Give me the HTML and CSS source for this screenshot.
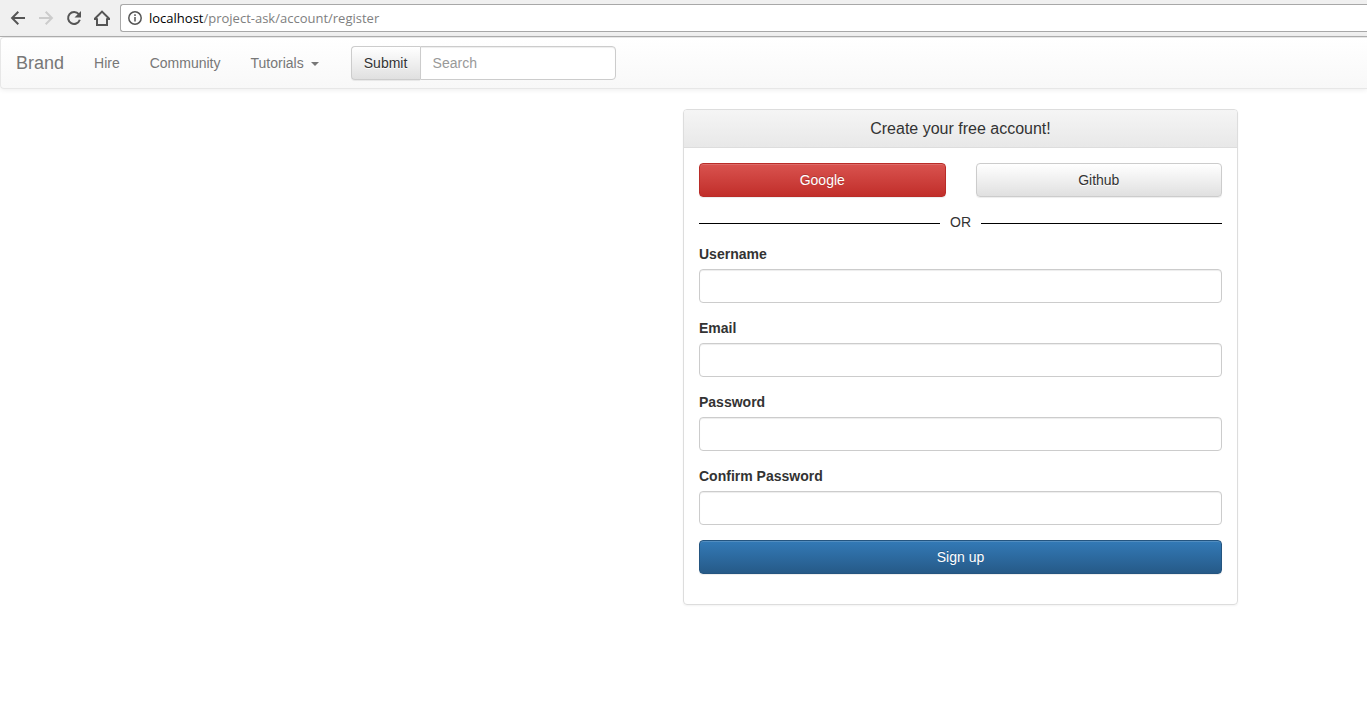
FILE: index.html
```html
<!DOCTYPE html>
<html lang="en">
<head>
<meta charset="utf-8">
<title>Register</title>
<link rel="stylesheet" href="styles.css">
</head>
<body>
<div class="toolbar">
  <button class="tool" type="button" aria-label="Back"><svg viewBox="0 0 16 16"><path d="M15 8H2.5M8.3 1.8 2.1 8l6.2 6.2"/></svg></button>
  <button class="tool tool-off" type="button" aria-label="Forward" disabled><svg viewBox="0 0 16 16"><path d="M1 8h12.5M7.7 1.8 13.9 8l-6.2 6.2"/></svg></button>
  <button class="tool" type="button" aria-label="Reload"><svg viewBox="0 0 16 16"><path d="M12.8 4.2A6 6 0 1 0 13.8 9.8"/><path class="solid" d="M15 1v6.500H8.500z"/></svg></button>
  <button class="tool" type="button" aria-label="Home"><svg viewBox="0 0 16 16"><path d="M3 8.200V15h10V8.200M0 9h3M13 9h3M.8 8.800 8 1.600l7.200 7.200"/></svg></button>
  <div class="address">
    <svg class="info" viewBox="0 0 14 14"><circle cx="7" cy="7" r="6.200"/><path d="M7 6v4.500M7 3.300v1.700"/></svg>
    <div class="url"><span class="host">localhost</span>/project-ask/account/register</div>
  </div>
</div>
<nav class="navbar">
  <a class="brand" href="#">Brand</a>
  <a class="nav-link" href="#">Hire</a>
  <a class="nav-link" href="#">Community</a>
  <a class="nav-link" href="#">Tutorials <span class="caret"></span></a>
  <form class="search">
    <button class="btn btn-default btn-joined" type="submit">Submit</button>
    <input class="field field-joined" type="text" placeholder="Search" aria-label="Search">
  </form>
</nav>
<main class="page">
  <section class="panel">
    <h1 class="panel-title">Create your free account!</h1>
    <div class="panel-body">
      <div class="providers">
        <button class="btn btn-danger" type="button">Google</button>
        <button class="btn btn-default" type="button">Github</button>
      </div>
      <div class="divider">OR</div>
      <form class="register">
        <div class="group"><label class="label" for="username">Username</label><input class="field" id="username" type="text"></div>
        <div class="group"><label class="label" for="email">Email</label><input class="field" id="email" type="email"></div>
        <div class="group"><label class="label" for="password">Password</label><input class="field" id="password" type="password"></div>
        <div class="group"><label class="label" for="confirm">Confirm Password</label><input class="field" id="confirm" type="password"></div>
        <button class="btn btn-primary" type="submit">Sign up</button>
      </form>
    </div>
  </section>
</main>
</body>
</html>
```

FILE: styles.css
```css
* { box-sizing: border-box; }

body {
  margin: 0;
  background: #fff;
  color: #333;
  font: 14px/20px "Liberation Sans", Arial, sans-serif;
}

/* Browser toolbar */
.toolbar {
  display: flex;
  align-items: center;
  gap: 12px;
  padding: 4px 0 4px 10px;
  border-bottom: 1px solid #b0b0b0;
  background: #f0f0f0;
}
.tool {
  width: 16px;
  height: 16px;
  padding: 0;
  border: 0;
  background: none;
  color: #555;
}
.tool-off { color: #ccc; }
.tool svg {
  display: block;
  fill: none;
  stroke: currentColor;
  stroke-width: 2;
}
.tool .solid {
  fill: currentColor;
  stroke: none;
}
.address {
  display: flex;
  flex: 1;
  align-items: center;
  gap: 7px;
  height: 28px;
  margin-left: -2px;
  padding-left: 7px;
  border: 1px solid #a8a8a8;
  border-right: 0;
  border-radius: 3px 0 0 3px;
  background: #fff;
}
.info {
  width: 14px;
  height: 14px;
  fill: none;
  stroke: #555;
  stroke-width: 1.5;
}
.url {
  color: #808080;
  font-family: "Open Sans", "Noto Sans", sans-serif;
  font-size: 13px;
}
.host { color: #000; }

/* Site navigation */
.navbar {
  display: flex;
  align-items: center;
  height: 52px;
  border: 1px solid #e7e7e7;
  border-right: 0;
  border-radius: 4px 0 0 4px;
  background: linear-gradient(#fff, #f8f8f8);
  box-shadow: inset 0 1px 0 rgba(255, 255, 255, .15), 0 1px 5px rgba(0, 0, 0, .075);
}
.brand, .nav-link {
  padding: 15px;
  color: #777;
  text-decoration: none;
  text-shadow: 0 1px 0 rgba(255, 255, 255, .25);
}
.brand { font-size: 18px; }
.caret {
  display: inline-block;
  margin-left: 3px;
  border: 4px solid transparent;
  border-top-color: currentColor;
  border-bottom: 0;
  vertical-align: middle;
}
.search {
  display: flex;
  padding: 0 17px;
}

/* Controls */
.btn {
  height: 34px;
  padding: 6px 12px;
  border: 1px solid;
  border-radius: 4px;
  font: inherit;
  box-shadow: inset 0 1px 0 rgba(255, 255, 255, .15), 0 1px 1px rgba(0, 0, 0, .075);
}
.btn-default {
  border-color: #ccc;
  background: linear-gradient(#fff, #e0e0e0);
  color: #333;
  text-shadow: 0 1px 0 #fff;
}
.btn-danger {
  border-color: #b92c28;
  background: linear-gradient(#d9534f, #c12e2a);
  color: #fff;
  text-shadow: 0 -1px 0 rgba(0, 0, 0, .2);
}
.btn-primary {
  border-color: #245580;
  background: linear-gradient(#337ab7, #265a88);
  color: #fff;
  text-shadow: 0 -1px 0 rgba(0, 0, 0, .2);
}
.field {
  width: 100%;
  height: 34px;
  padding: 6px 12px;
  border: 1px solid #ccc;
  border-radius: 4px;
  background: #fff;
  color: #555;
  font: inherit;
  box-shadow: inset 0 1px 1px rgba(0, 0, 0, .075);
}
.field::placeholder { color: #999; }
.btn-joined {
  min-width: 69px;
  border-right: 0;
  border-radius: 4px 0 0 4px;
}
.field-joined {
  width: 196px;
  border-radius: 0 4px 4px 0;
}

/* Registration panel */
.page {
  display: grid;
  grid-template-columns: 683fr 555fr 129fr;
  padding: 20px 0;
}
.panel {
  grid-column: 2;
  border: 1px solid #ddd;
  border-radius: 4px;
  box-shadow: 0 1px 2px rgba(0, 0, 0, .05);
}
.panel-title {
  margin: 0;
  padding: 10px 15px;
  border-bottom: 1px solid #ddd;
  border-radius: 3px 3px 0 0;
  background: linear-gradient(#f5f5f5, #e8e8e8);
  font-size: 16px;
  font-weight: 400;
  line-height: 17px;
  text-align: center;
}
.panel-body { padding: 15px 15px 30px; }
.providers {
  display: grid;
  grid-template-columns: 1fr 1fr;
  gap: 30px;
}
.divider {
  display: flex;
  align-items: center;
  gap: 10px;
  margin: 15px 0 12px;
}
.divider::before, .divider::after {
  content: "";
  flex: 1;
  height: 2px;
  border-bottom: 1px solid #000;
}
.register {
  display: grid;
  gap: 15px;
}
.group {
  display: grid;
  gap: 5px;
}
.label { font-weight: 700; }
```
